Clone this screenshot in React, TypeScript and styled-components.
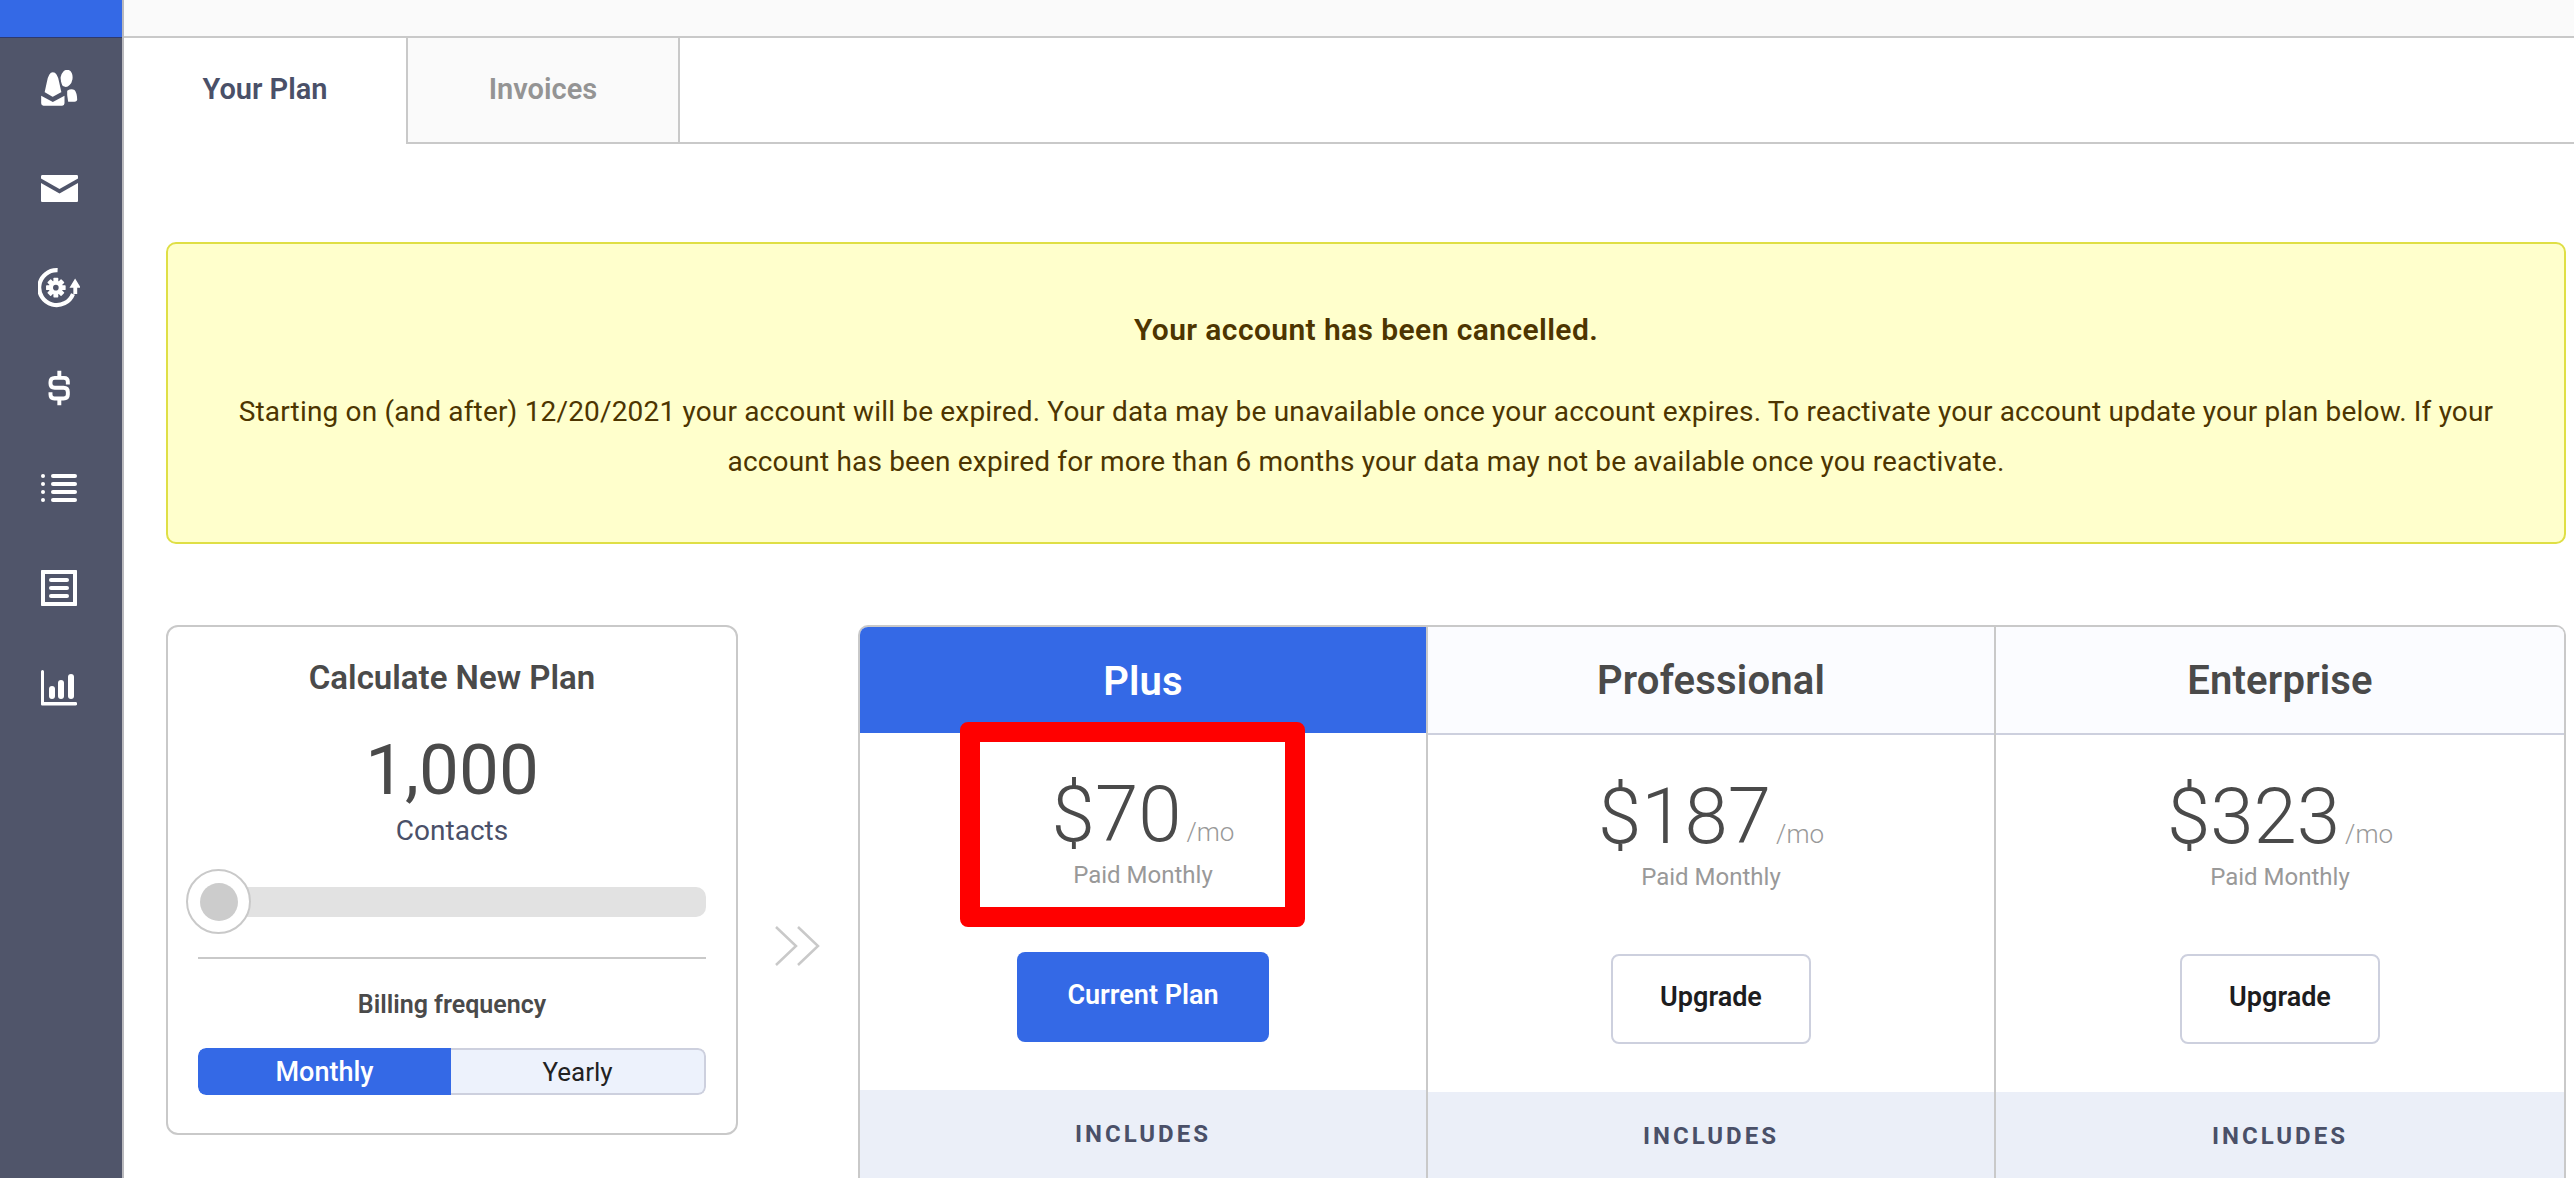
import React from "react";
import styled, { createGlobalStyle } from "styled-components";

const FONT = `Roboto, "Noto Sans", "Liberation Sans", sans-serif`;
const BLUE = "#3469e6";
const LINE = "#c9c9c9";
const SOFT = "#cdd0de";
const SLATE = "#4a5068";
const INK = "#4a4a4a";
const SIDE = "#50556a";

const Global = createGlobalStyle`
  html, body { margin: 0; padding: 0; background: #fff; }
  body { width: 2574px; height: 1178px; overflow: hidden; font-family: ${FONT}; }
  #root { width: 2574px; height: 1178px; }
  * { box-sizing: border-box; }
`;

const Page = styled.div`
  display: flex;
  width: 2574px;
  height: 1178px;
  overflow: hidden;
`;
const Sidebar = styled.nav`
  flex: 0 0 124px;
  display: flex;
  flex-direction: column;
  background: ${SIDE};
  border-right: 2px solid #b9b9bd;
`;
const Brand = styled.div`
  height: 38px;
  background: ${BLUE};
  border-bottom: 1px solid #2e3a6e;
`;
const NavList = styled.div`
  display: flex;
  flex-direction: column;
`;
const NavItem = styled.a`
  height: 100px;
  display: flex;
  align-items: center;
  justify-content: center;
  color: #fff;
  padding-right: 4px;
`;
const Main = styled.main`
  flex: 1;
  min-width: 0;
  display: flex;
  flex-direction: column;
`;
const TopBar = styled.div`
  flex: 0 0 38px;
  background: #fafafa;
  border-bottom: 2px solid ${LINE};
`;
const Tabs = styled.div`
  flex: 0 0 106px;
  display: flex;
  align-items: stretch;
`;
const Tab = styled.div<{ $active?: boolean; $w: number }>`
  flex: 0 0 ${(p) => p.$w}px;
  display: flex;
  justify-content: center;
  padding-top: 33px;
  font-size: 29px;
  line-height: 36px;
  font-weight: 600;
  color: ${(p) => (p.$active ? SLATE : "#949494")};
  background: ${(p) => (p.$active ? "#fff" : "#fafafa")};
  border-right: ${(p) => (p.$active ? "none" : `2px solid ${LINE}`)};
  border-bottom: ${(p) => (p.$active ? "none" : `2px solid ${LINE}`)};
  border-left: ${(p) => (p.$active ? "none" : `2px solid ${LINE}`)};
`;
const TabRest = styled.div`
  flex: 1;
  background: #fff;
  border-bottom: 2px solid ${LINE};
`;
const Content = styled.div`
  flex: 1;
  min-height: 0;
  display: flex;
  flex-direction: column;
  gap: 81px;
  padding: 98px 8px 0 42px;
`;
const Alert = styled.section`
  flex: 0 0 302px;
  background: #ffffcc;
  border: 2px solid #dfdf45;
  border-radius: 10px;
  color: #4d3500;
  text-align: center;
  padding: 66px 64px 0;
  font-size: 28px;
  letter-spacing: 0.17px;
  line-height: 50px;
`;
const AlertTitle = styled.div`
  font-size: 30px;
  letter-spacing: 0.4px;
  line-height: 40px;
  font-weight: 600;
  margin-bottom: 37px;
`;
const PlanRow = styled.div`
  flex: 0 0 auto;
  display: flex;
  align-items: flex-start;
`;
const Calc = styled.section`
  flex: 0 0 572px;
  height: 510px;
  border: 2px solid ${LINE};
  border-radius: 12px;
  padding: 29px 30px 0;
  display: flex;
  flex-direction: column;
  align-items: center;
  color: ${INK};
`;
const CalcTitle = styled.h2`
  margin: 0;
  font-size: 33px;
  line-height: 44px;
  font-weight: 600;
`;
const ContactCount = styled.div`
  margin-top: 33px;
  font-size: 71px;
  line-height: 74px;
  font-weight: 400;
`;
const ContactLabel = styled.div`
  margin-top: 6px;
  font-size: 28px;
  line-height: 36px;
  color: ${SLATE};
`;
const Slider = styled.div`
  position: relative;
  align-self: stretch;
  height: 30px;
  margin-top: 38px;
  background: #e2e2e2;
  border-radius: 10px;
`;
const Thumb = styled.div`
  position: absolute;
  left: -12px;
  top: -18px;
  width: 65px;
  height: 65px;
  border-radius: 50%;
  background: #fff;
  border: 2px solid ${LINE};
  display: flex;
  align-items: center;
  justify-content: center;
  &::after {
    content: "";
    width: 38px;
    height: 38px;
    border-radius: 50%;
    background: #cccccc;
  }
`;
const Divider = styled.hr`
  align-self: stretch;
  margin: 40px 0 0;
  border: 0;
  border-top: 2px solid ${LINE};
`;
const BillingLabel = styled.div`
  margin-top: 29px;
  font-size: 25px;
  line-height: 34px;
  font-weight: 600;
`;
const Toggle = styled.div`
  align-self: stretch;
  flex: 0 0 47px;
  display: flex;
  margin-top: 26px;
  border-radius: 8px;
  overflow: hidden;
`;
const ToggleOption = styled.div<{ $on?: boolean }>`
  flex: 1;
  display: flex;
  align-items: center;
  justify-content: center;
  font-size: ${(p) => (p.$on ? 27 : 26)}px;
  background: ${(p) => (p.$on ? BLUE : "#edf2fc")};
  color: ${(p) => (p.$on ? "#fff" : "#222")};
  border: ${(p) => (p.$on ? "none" : `2px solid ${SOFT}`)};
  border-left: none;
  border-radius: ${(p) => (p.$on ? "8px 0 0 8px" : "0 8px 8px 0")};
  font-weight: ${(p) => (p.$on ? 500 : 400)};
`;
const Arrow = styled.div`
  flex: 0 0 120px;
  height: 510px;
  display: flex;
  justify-content: center;
  padding-top: 301px;
  color: ${LINE};
`;
const Table = styled.section`
  position: relative;
  flex: 1;
  min-width: 0;
  height: 560px;
  display: grid;
  grid-template-columns: repeat(3, 1fr);
  border-top: 2px solid ${LINE};
  border-left: 2px solid ${LINE};
  border-right: 2px solid ${LINE};
  border-radius: 10px 10px 0 0;
  overflow: hidden;
`;
const Column = styled.div<{ $last?: boolean }>`
  display: flex;
  flex-direction: column;
  align-items: center;
  border-right: ${(p) => (p.$last ? "none" : `2px solid ${LINE}`)};
`;
const PlanHead = styled.div<{ $on?: boolean }>`
  align-self: stretch;
  flex: 0 0 ${(p) => (p.$on ? 106 : 108)}px;
  display: flex;
  align-items: center;
  justify-content: center;
  padding-top: ${(p) => (p.$on ? 2 : 0)}px;
  font-size: 40px;
  letter-spacing: 0.2px;
  font-weight: 600;
  background: ${(p) => (p.$on ? BLUE : "#fbfcff")};
  color: ${(p) => (p.$on ? "#fff" : INK)};
  border-bottom: ${(p) => (p.$on ? "none" : `2px solid ${SOFT}`)};
`;
const Price = styled.div`
  margin-top: 45px;
  display: flex;
  align-items: baseline;
  gap: 5px;
  color: ${INK};
`;
const Amount = styled.span`
  font-size: 78px;
  line-height: 74px;
  font-weight: 300;
`;
const Per = styled.span`
  font-size: 26px;
  line-height: 1;
  font-weight: 300;
  color: #999;
`;
const Billed = styled.div`
  margin-top: 6px;
  font-size: 24px;
  line-height: 34px;
  color: #999;
`;
const PlanButton = styled.div<{ $on?: boolean }>`
  margin-top: 60px;
  width: ${(p) => (p.$on ? 252 : 200)}px;
  flex: 0 0 90px;
  display: flex;
  align-items: center;
  justify-content: center;
  padding-bottom: 4px;
  font-size: 27px;
  font-weight: 600;
  border-radius: 8px;
  background: ${(p) => (p.$on ? BLUE : "#fff")};
  color: ${(p) => (p.$on ? "#fff" : "#1d1d1f")};
  border: ${(p) => (p.$on ? "none" : `2px solid ${SOFT}`)};
`;
const Includes = styled.div`
  align-self: stretch;
  margin-top: 48px;
  flex: 0 0 88px;
  display: flex;
  align-items: center;
  justify-content: center;
  font-size: 24px;
  font-weight: 700;
  letter-spacing: 3px;
  color: ${SLATE};
  background: #ebeff8;
`;
const Callout = styled.div`
  position: absolute;
  left: 100px;
  top: 95px;
  width: 345px;
  height: 205px;
  border: 20px solid #ff0000;
  border-radius: 8px;
`;

const UsersIcon = () => (
  <svg width="37" height="36" viewBox="30 30 110 108" fill="currentColor">
    <ellipse cx="106" cy="55" rx="18" ry="26" transform="rotate(10 106 55)" />
    <path d="M108 92Q120 85 130 90Q138 100 138 118Q138 125 130 125H111L108 105Z" />
    <path d="M65 34C52 34 47 50 44 66L37 98L65 114L94 98L87 66C84 50 78 34 65 34Z" stroke={SIDE} strokeWidth="6" />
    <path d="M30 107L65 126L100 107V130Q100 137 93 137H37Q30 137 30 130Z" />
  </svg>
);
const MailIcon = () => (
  <svg width="37" height="27" viewBox="0 0 37 27" fill="currentColor">
    <path d="M1.500 0h34c1 0 1.500.5 1.500 1.500v2L18.500 14 0 3.500v-2C0 .5.500 0 1.500 0z" />
    <path d="M0 8l18.500 10.500L37 8v17.500c0 1-.5 1.500-1.500 1.500h-34C.5 27 0 26.500 0 25.500z" />
  </svg>
);
const gearTeeth = [0, 45, 90, 135];
const CycleIcon = () => (
  <svg width="42" height="40" viewBox="24 30 120 114" fill="currentColor">
    <path d="M80 36A50 50 0 1 0 124 104" fill="none" stroke="currentColor" strokeWidth="12" />
    <path d="M130 60L146 86H136V104H125V86H114Z" />
    <circle cx="75" cy="86" r="20" />
    {gearTeeth.map((a) => (
      <rect key={a} x="68" y="58" width="14" height="56" rx="2" transform={`rotate(${a} 75 86)`} />
    ))}
    <circle cx="75" cy="86" r="8" fill={SIDE} />
  </svg>
);
const DollarIcon = () => (
  <svg width="24" height="36" viewBox="45 28 72 110" fill="none" stroke="currentColor" strokeWidth="12">
    <path d="M82 30V50M82 116V136" />
    <path d="M108 72V64Q108 52 96 52H68Q55 52 55 65V70Q55 82 68 82H95Q108 82 108 95V103Q108 115 95 115H67Q55 115 55 103V96" />
  </svg>
);
const ListIcon = () => (
  <svg width="36" height="28" viewBox="0 0 36 28" fill="currentColor">
    {[0, 8, 16, 24].map((y) => (
      <React.Fragment key={y}>
        <circle cx="2" cy={y + 2} r="2" />
        <rect x="10" y={y} width="26" height="4" rx="2" />
      </React.Fragment>
    ))}
  </svg>
);
const DocIcon = () => (
  <svg width="36" height="36" viewBox="0 0 36 36" fill="currentColor">
    <path fillRule="evenodd" d="M1 0h34c.6 0 1 .4 1 1v34c0 .6-.4 1-1 1H1c-.6 0-1-.4-1-1V1c0-.6.4-1 1-1zm3 4v28h28V4z" />
    {[8, 16, 24].map((y) => (
      <rect key={y} x="8" y={y} width="20" height="4" rx="2" />
    ))}
  </svg>
);
const ChartIcon = () => (
  <svg width="36" height="36" viewBox="0 0 36 36" fill="currentColor">
    <path d="M0 1.500a1.500 1.500 0 0 1 3 0V32h31.500a1.500 1.500 0 0 1 0 3.500H1.500C.5 35.500 0 35 0 34z" />
    <rect x="8" y="16" width="6" height="13" rx="3" />
    <rect x="17" y="10" width="6" height="19" rx="3" />
    <rect x="27" y="4" width="6" height="25" rx="3" />
  </svg>
);
const Chevrons = () => (
  <svg width="46" height="40" viewBox="0 0 46 40" fill="none" stroke="currentColor" strokeWidth="2.500">
    <path d="M1 1l20 19L1 39" />
    <path d="M23 1l20 19-20 19" />
  </svg>
);

const plans = [
  { name: "Plus", price: "$70", on: true, cta: "Current Plan" },
  { name: "Professional", price: "$187", on: false, cta: "Upgrade" },
  { name: "Enterprise", price: "$323", on: false, cta: "Upgrade" },
];

export default function App() {
  return (
    <Page>
      <Global />
      <Sidebar>
        <Brand />
        <NavList>
          <NavItem><UsersIcon /></NavItem>
          <NavItem><MailIcon /></NavItem>
          <NavItem><CycleIcon /></NavItem>
          <NavItem><DollarIcon /></NavItem>
          <NavItem><ListIcon /></NavItem>
          <NavItem><DocIcon /></NavItem>
          <NavItem><ChartIcon /></NavItem>
        </NavList>
      </Sidebar>
      <Main>
        <TopBar />
        <Tabs>
          <Tab $active $w={282}>Your Plan</Tab>
          <Tab $w={274}>Invoices</Tab>
          <TabRest />
        </Tabs>
        <Content>
          <Alert>
            <AlertTitle>Your account has been cancelled.</AlertTitle>
            Starting on (and after) 12/20/2021 your account will be expired. Your data may be unavailable once your account expires. To reactivate your account update your plan below. If your account has been expired for more than 6 months your data may not be available once you reactivate.
          </Alert>
          <PlanRow>
            <Calc>
              <CalcTitle>Calculate New Plan</CalcTitle>
              <ContactCount>1,000</ContactCount>
              <ContactLabel>Contacts</ContactLabel>
              <Slider><Thumb /></Slider>
              <Divider />
              <BillingLabel>Billing frequency</BillingLabel>
              <Toggle>
                <ToggleOption $on>Monthly</ToggleOption>
                <ToggleOption>Yearly</ToggleOption>
              </Toggle>
            </Calc>
            <Arrow><Chevrons /></Arrow>
            <Table>
              {plans.map((p, i) => (
                <Column key={p.name} $last={i === plans.length - 1}>
                  <PlanHead $on={p.on}>{p.name}</PlanHead>
                  <Price>
                    <Amount>{p.price}</Amount>
                    <Per>/mo</Per>
                  </Price>
                  <Billed>Paid Monthly</Billed>
                  <PlanButton $on={p.on}>{p.cta}</PlanButton>
                  <Includes>INCLUDES</Includes>
                </Column>
              ))}
              <Callout />
            </Table>
          </PlanRow>
        </Content>
      </Main>
    </Page>
  );
}
